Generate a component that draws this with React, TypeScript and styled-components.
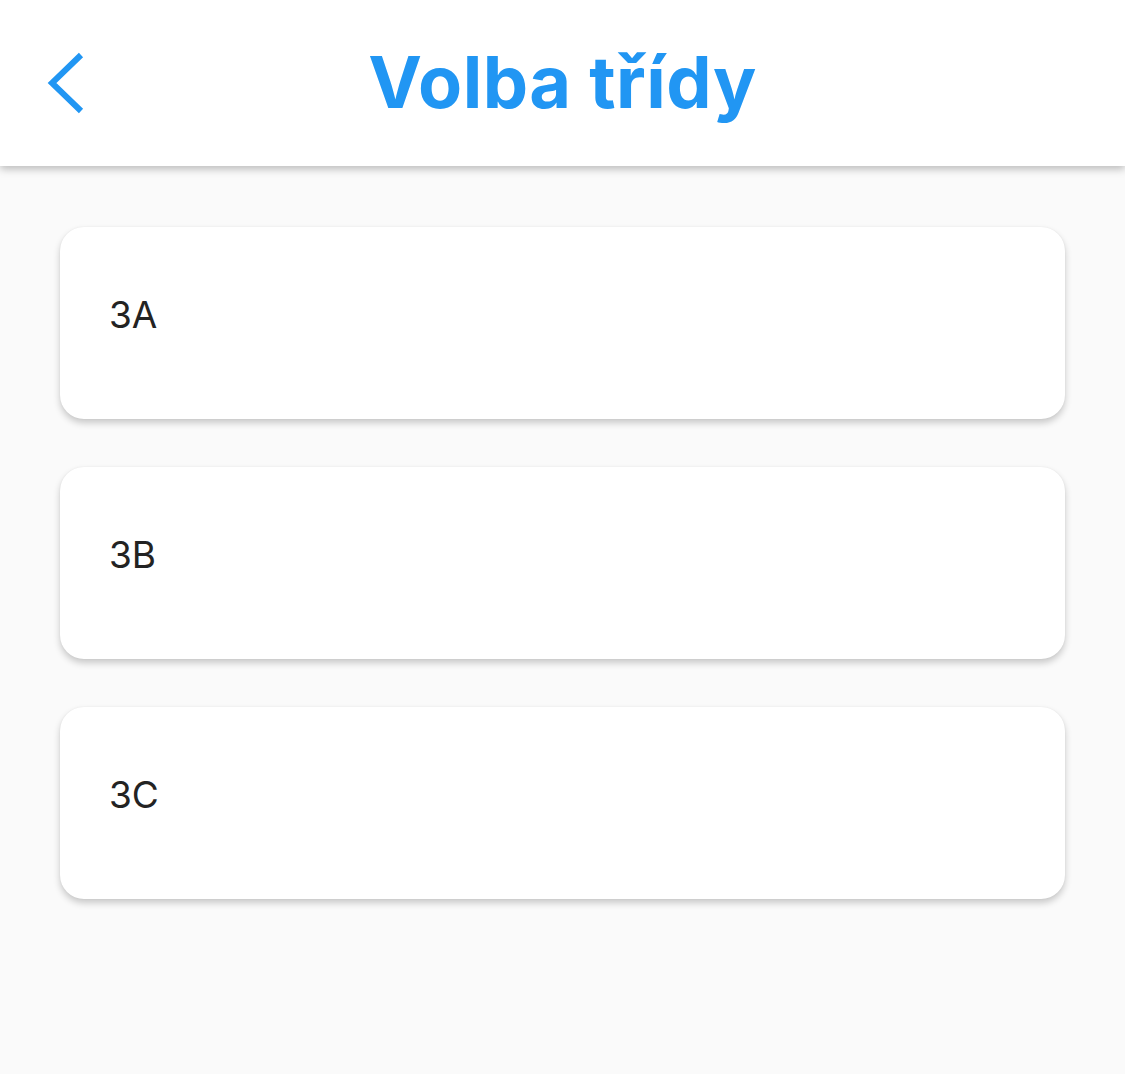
import styled, { createGlobalStyle } from "styled-components";

const GlobalStyle = createGlobalStyle`
  html, body {
    margin: 0;
    padding: 0;
    background: #fafafa;
    font-family: Inter, "Noto Sans", sans-serif;
  }
`;

const StyledPage = styled.div`
  min-height: 1074px;
  background: #fafafa;
`;

const StyledHeader = styled.header`
  position: relative;
  z-index: 1;
  height: 166px;
  background: #ffffff;
  box-shadow: 0 3px 8px rgba(0, 0, 0, 0.26);
  display: grid;
  grid-template-columns: 130px 1fr 130px;
  align-items: center;
`;

const StyledBackButton = styled.button`
  border: 0;
  background: none;
  padding: 0 0 0 45px;
  height: 100%;
  display: flex;
  align-items: center;
  cursor: pointer;
`;

const StyledTitle = styled.h1`
  margin: 0;
  text-align: center;
  color: #2196f3;
  font-size: 72px;
  font-weight: 700;
  letter-spacing: 0.5px;
  line-height: 1;
  padding-bottom: 3px;
`;

const StyledList = styled.div`
  display: flex;
  flex-direction: column;
  gap: 48px;
  padding: 61px 60px;
`;

const StyledCard = styled.div`
  height: 192px;
  box-sizing: border-box;
  background: #ffffff;
  border-radius: 24px;
  box-shadow: 0 4px 7px rgba(0, 0, 0, 0.2), 0 0 2px rgba(0, 0, 0, 0.06);
  padding: 64px 49px;
  font-size: 37px;
  font-weight: 400;
  line-height: 48px;
  color: #232323;
  cursor: pointer;
`;

const classes = ["3A", "3B", "3C"];

function BackIcon() {
  return (
    <svg width="42" height="64" viewBox="0 0 42 64">
      <polyline
        points="36,4 7,32 36,60"
        fill="none"
        stroke="#2196f3"
        strokeWidth="6"
      />
    </svg>
  );
}

export default function App() {
  return (
    <StyledPage>
      <GlobalStyle />
      <StyledHeader>
        <StyledBackButton aria-label="Zpět">
          <BackIcon />
        </StyledBackButton>
        <StyledTitle>Volba třídy</StyledTitle>
        <div />
      </StyledHeader>
      <StyledList>
        {classes.map((c) => (
          <StyledCard key={c}>{c}</StyledCard>
        ))}
      </StyledList>
    </StyledPage>
  );
}
